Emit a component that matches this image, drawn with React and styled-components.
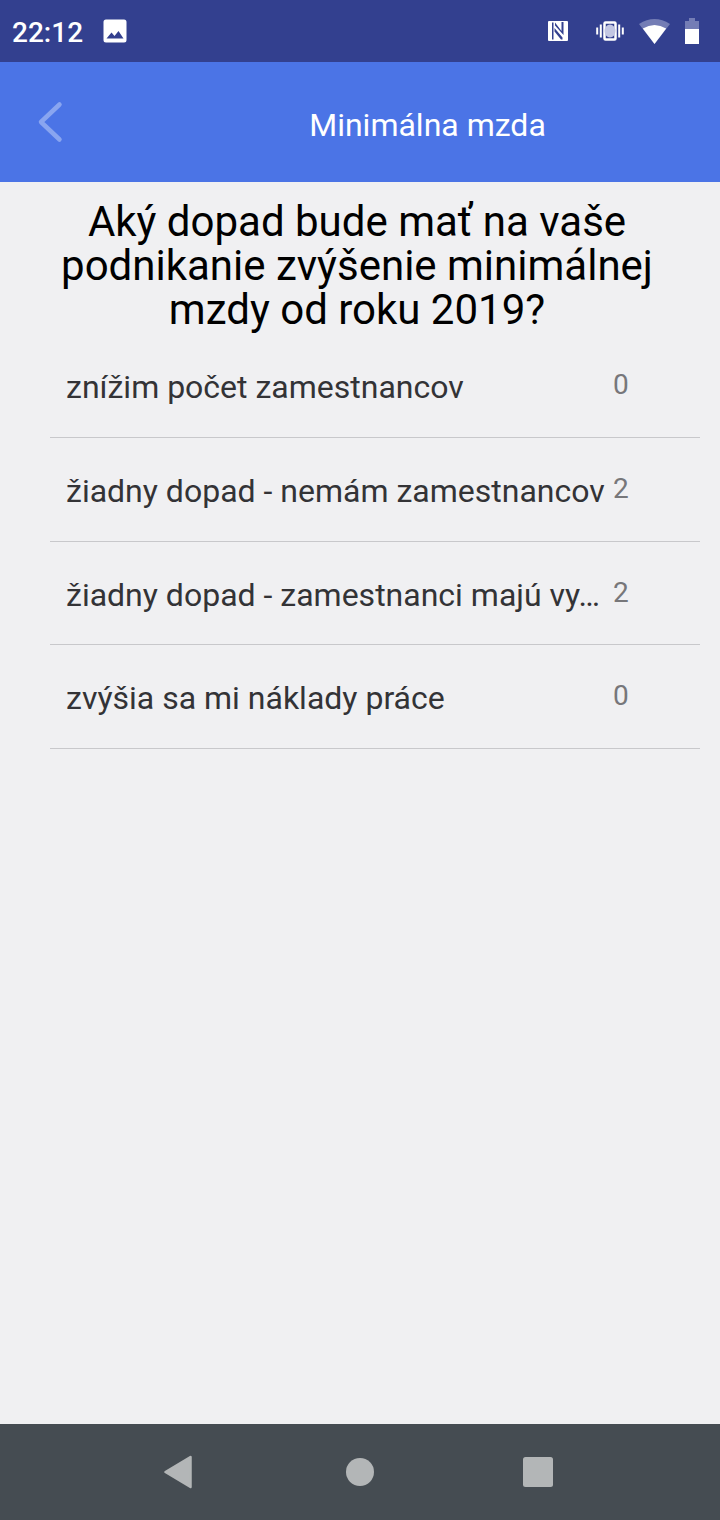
import React from "react";
import styled, { createGlobalStyle } from "styled-components";

const Global = createGlobalStyle`
  * { box-sizing: border-box; }
  body { margin: 0; background: #f0f0f2; }
`;

const Screen = styled.div`
  display: flex;
  flex-direction: column;
  width: 720px;
  height: 1520px;
  background: #f0f0f2;
  font-family: Roboto, "Noto Sans", sans-serif;
  overflow: hidden;
`;

const StatusBar = styled.header`
  display: flex;
  align-items: center;
  flex: none;
  height: 62px;
  padding: 0 21px 0 12px;
  background: #33408f;
`;

const Clock = styled.span`
  width: 91px;
  padding-top: 4px;
  color: #fff;
  font-size: 28px;
  font-weight: 500;
  line-height: 34px;
`;

const StatusIcons = styled.div`
  display: flex;
  align-items: center;
  margin-left: auto;
`;

const Glyph = styled.svg`
  display: block;
  flex: none;
  margin-left: ${(p) => p.$gap || 0}px;
`;

const AppBar = styled.div`
  display: flex;
  align-items: center;
  flex: none;
  height: 120px;
  background: #4b74e6;
`;

const BackButton = styled.button`
  display: flex;
  align-items: center;
  width: 135px;
  height: 120px;
  padding: 0 0 0 36px;
  border: 0;
  background: none;
`;

const Title = styled.h1`
  flex: 1;
  margin: 0;
  padding-top: 5px;
  color: #fff;
  font-size: 32px;
  font-weight: 400;
  line-height: 38px;
  text-align: center;
`;

const Content = styled.main`
  flex: 1;
  padding-top: 18px;
`;

const Question = styled.h2`
  width: 650px;
  height: 134px;
  margin: 0 0 0 32px;
  color: #000;
  font-size: 42px;
  font-weight: 400;
  line-height: 44px;
  text-align: center;
`;

const List = styled.ul`
  margin: 0 20px 0 50px;
  padding: 0;
  list-style: none;
`;

const Row = styled.li`
  display: flex;
  align-items: flex-start;
  height: ${(p) => p.$height}px;
  padding: 34px 0 0 16px;
  border-bottom: 1px solid #c8c8cb;
`;

const Label = styled.span`
  width: 540px;
  color: #333336;
  font-size: 32px;
  line-height: 38px;
  white-space: nowrap;
`;

const Count = styled.span`
  margin: 1px 0 0 7px;
  color: #77777a;
  font-size: 28px;
  line-height: 32px;
`;

const NavBar = styled.nav`
  display: flex;
  align-items: center;
  flex: none;
  height: 96px;
  padding-left: 162px;
  background: #454c52;
`;

const answers = [
  { label: "znížim počet zamestnancov", count: 0, height: 104 },
  { label: "žiadny dopad - nemám zamestnancov", count: 2, height: 104 },
  { label: "žiadny dopad - zamestnanci majú vy…", count: 2, height: 103 },
  { label: "zvýšia sa mi náklady práce", count: 0, height: 104 },
];

export default function App() {
  return (
    <Screen>
      <Global />
      <StatusBar>
        <Clock>22:12</Clock>
        <Glyph width="24" height="24" viewBox="0 0 24 24">
          <path
            fill="#fff"
            fillRule="evenodd"
            d="M3 .5H21Q23.5 .5 23.5 3V21Q23.5 23.5 21 23.5H3Q.5 23.5 .5 21V3Q.5 .5 3 .5ZM3.5 19.5H20.5L15.5 12L11.5 17L8.5 13.5Z"
          />
        </Glyph>
        <StatusIcons>
          <Glyph width="20" height="20" viewBox="0 0 20 20">
            <rect width="20" height="20" rx="1" fill="#fff" />
            <path
              d="M4 1.500H5.500V18.500H4ZM7 1.500L13.500 10V1H15.500V14L7 4.500ZM6.500 7L14.500 16.500V18.500H13L6.500 10.500Z"
              fill="#33408f"
            />
          </Glyph>
          <Glyph $gap={28} width="28" height="20" viewBox="0 0 28 20">
            <path d="M1.200 6.500V13.500M4.800 3.500V16.500M23.200 3.500V16.500M26.800 6.500V13.500" stroke="#fff" strokeWidth="2" />
            <rect x="8.500" y="1.500" width="11" height="17" rx="1" fill="#33408f" stroke="#fff" strokeWidth="2.500" />
            <ellipse cx="14" cy="10" rx="5.500" ry="6.500" fill="#c3c7e3" />
          </Glyph>
          <Glyph $gap={15} width="31" height="25" viewBox="0 0 31 25">
            <path d="M0 5Q15.500 -5 31 5L15.500 25Z" fill="#747db5" />
            <path d="M3.800 9.600Q15.500 2.600 27.200 9.600L15.500 25Z" fill="#fff" />
          </Glyph>
          <Glyph $gap={15} width="14" height="26" viewBox="0 0 14 26">
            <path d="M4 0H10V3H14V11H0V3H4Z" fill="#747db5" />
            <path d="M0 11H14V26H0Z" fill="#fff" />
          </Glyph>
        </StatusIcons>
      </StatusBar>
      <AppBar>
        <BackButton aria-label="Späť">
          <Glyph width="28" height="42" viewBox="0 0 28 42">
            <path
              d="M23.500 3.500L5 21L23.500 38.500"
              fill="none"
              stroke="#89a5f0"
              strokeWidth="4.500"
              strokeLinecap="round"
              strokeLinejoin="round"
            />
          </Glyph>
        </BackButton>
        <Title>Minimálna mzda</Title>
      </AppBar>
      <Content>
        <Question>Aký dopad bude mať na vaše podnikanie zvýšenie minimálnej mzdy od roku 2019?</Question>
        <List>
          {answers.map((a) => (
            <Row key={a.label} $height={a.height}>
              <Label>{a.label}</Label>
              <Count>{a.count}</Count>
            </Row>
          ))}
        </List>
      </Content>
      <NavBar>
        <Glyph width="32" height="34" viewBox="0 0 32 34">
          <path
            d="M28.500 2L3.500 17L28.500 32Z"
            fill="#b3b6b7"
            stroke="#b3b6b7"
            strokeWidth="2.500"
            strokeLinejoin="round"
          />
        </Glyph>
        <Glyph $gap={152} width="28" height="28" viewBox="0 0 28 28">
          <circle cx="14" cy="14" r="14" fill="#b3b6b7" />
        </Glyph>
        <Glyph $gap={148} width="32" height="32" viewBox="0 0 32 32">
          <rect x="1" y="1" width="30" height="30" rx="2.500" fill="#b3b6b7" />
        </Glyph>
      </NavBar>
    </Screen>
  );
}
